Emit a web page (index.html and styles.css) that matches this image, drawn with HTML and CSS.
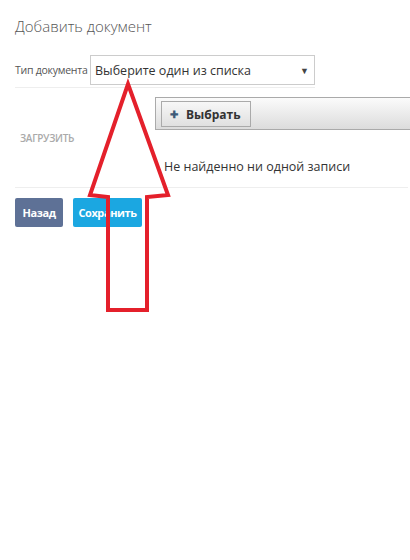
FILE: index.html
```html
<!DOCTYPE html>
<html lang="ru">
<head>
<meta charset="utf-8">
<link rel="stylesheet" href="styles.css">
</head>
<body>
<div class="page">
  <h1 class="title">Добавить документ</h1>
  <div class="field">
    <label class="field-label">Тип документа</label>
    <div class="select">
      <span class="select-text">Выберите один из списка</span>
      <span class="select-caret">▼</span>
    </div>
  </div>
  <div class="upload">
    <div class="upload-label">ЗАГРУЗИТЬ</div>
    <div class="upload-body">
      <div class="toolbar">
        <button class="pick-btn"><span class="plus">✚</span>Выбрать</button>
      </div>
      <div class="empty">Не найденно ни одной записи</div>
    </div>
  </div>
  <div class="actions">
    <button class="btn btn-back">Назад</button>
    <button class="btn btn-save">Сохранить</button>
  </div>
</div>
<svg class="arrow" width="410" height="560" viewBox="0 0 410 560">
  <polygon points="128,84 168,195 147,197 147,310 108,310 108,197 90,195" fill="none" stroke="#e4202b" stroke-width="4" stroke-linejoin="miter"/>
</svg>
</body>
</html>
```
FILE: styles.css
```css
html, body {
  margin: 0;
  padding: 0;
  background: #fff;
}
body {
  font-family: "Open Sans", "Noto Sans", sans-serif;
  color: #333;
  position: relative;
  width: 410px;
  height: 560px;
  overflow: hidden;
}
.page {
  padding: 16px 0 0 15px;
}
.title {
  margin: 0;
  font-size: 15px;
  font-weight: 300;
  line-height: 20px;
  color: #555;
}
.field {
  display: flex;
  align-items: center;
  margin-top: 19px;
  width: 300px;
  padding-bottom: 2px;
  border-bottom: 1px solid #eee;
}
.field-label {
  font-size: 10.5px;
  letter-spacing: -0.25px;
  color: #555;
  width: 75px;
  white-space: nowrap;
}
.select {
  box-sizing: border-box;
  width: 225px;
  height: 30px;
  border: 1px solid #ccc;
  display: flex;
  align-items: center;
  justify-content: space-between;
  padding: 0 5px 0 4px;
}
.select-text {
  font-size: 12.5px;
  color: #333;
}
.select-caret {
  font-size: 9px;
  color: #444;
}
.upload {
  display: flex;
  width: 393px;
  border-bottom: 1px solid #eee;
  padding-top: 9px;
}
.upload-label {
  width: 140px;
  box-sizing: border-box;
  padding: 34px 0 0 5px;
  font-size: 10px;
  font-weight: 600;
  color: #aaa;
  letter-spacing: -0.3px;
}
.upload-body {
  flex: 1;
  margin-right: -20px;
}
.toolbar {
  box-sizing: border-box;
  height: 33px;
  border: 1px solid #aaa;
  border-right: none;
  background: linear-gradient(#fbfbfb, #dcdcdc);
  padding: 3px 5px;
}
.pick-btn {
  box-sizing: border-box;
  height: 26px;
  width: 90px;
  border: 1px solid #aaa;
  background: linear-gradient(#f7f7f7, #e0e0e0);
  font-family: "Open Sans", sans-serif;
  font-size: 12px;
  font-weight: 700;
  color: #333;
  display: flex;
  align-items: center;
  padding: 0 0 0 8px;
}
.plus {
  color: #3d5a78;
  font-size: 10px;
  margin-right: 8px;
}
.empty {
  font-size: 12.5px;
  color: #333;
  padding: 28px 0 12px 9px;
}
.actions {
  display: flex;
  gap: 10px;
  margin-top: 10px;
}
.btn {
  height: 29px;
  border: none;
  border-radius: 2px;
  color: #fff;
  font-family: "Open Sans", sans-serif;
  font-size: 11px;
  font-weight: 700;
  letter-spacing: -0.4px;
  padding: 0;
}
.btn-back {
  width: 48px;
  background: #5e7196;
}
.btn-save {
  width: 69px;
  background: #1ba7e1;
}
.arrow {
  position: absolute;
  left: 0;
  top: 0;
  pointer-events: none;
}
```
